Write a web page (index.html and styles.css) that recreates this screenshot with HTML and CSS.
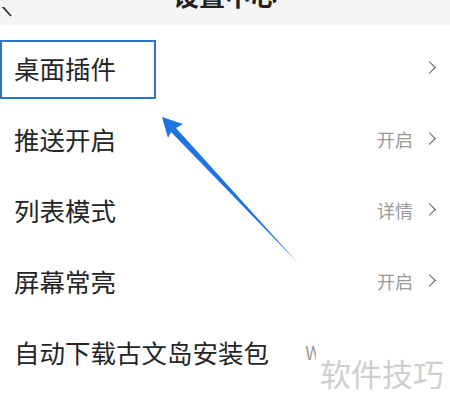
FILE: index.html
```html
<!DOCTYPE html>
<html lang="zh-CN">
  <head>
    <meta charset="UTF-8" />
    <meta name="viewport" content="width=device-width, initial-scale=1.0" />
    <title>设置中心</title>
    <link rel="stylesheet" href="styles.css">
  </head>
  <body>
    <div class="page">
      <header class="topbar">
        <span class="back">
          <svg width="14" height="12" viewBox="0 0 14 12"><path d="M12 -10 L2 -1 L11 9" fill="none" stroke="#333" stroke-width="1.8"/></svg>
        </span>
        <h1 class="title">设置中心</h1>
      </header>
      <ul class="settings">
        <li class="row">
          <span class="label">桌面插件</span>
          <span class="value"><i class="chev"></i></span>
        </li>
        <li class="row">
          <span class="label">推送开启</span>
          <span class="value">开启<i class="chev"></i></span>
        </li>
        <li class="row">
          <span class="label">列表模式</span>
          <span class="value">详情<i class="chev"></i></span>
        </li>
        <li class="row">
          <span class="label">屏幕常亮</span>
          <span class="value">开启<i class="chev"></i></span>
        </li>
        <li class="row">
          <span class="label">自动下载古文岛安装包</span>
          <span class="value">WiFi自动下载<i class="chev"></i></span>
        </li>
        <li class="row faded">
          <span class="label">清除缓存数据</span>
          <span class="value"></span>
        </li>
      </ul>

      <!-- annotation: highlight box + arrow -->
      <div class="focus-box"></div>
      <svg class="pointer" width="450" height="413" viewBox="0 0 450 413">
        <path d="M162 117 L183 124 L176 128 L298 263 L171 132 L168 138 Z" fill="#1f74e3"/>
      </svg>

      <div class="watermark">软件技巧</div>
    </div>
  </body>
</html>
```

FILE: styles.css
```css
* {
  box-sizing: border-box;
}
body {
  margin: 0;
  background: #fff;
  font-family: "Noto Sans CJK SC", "Noto Sans", sans-serif;
  color: #222;
}
.page {
  position: relative;
  width: 450px;
  height: 413px;
  overflow: hidden;
}
.topbar {
  height: 25px;
  background: #f5f5f5;
  overflow: hidden;
  position: relative;
}
.back {
  position: absolute;
  left: 0;
  top: 0;
}
.title {
  margin: -18px 0 0;
  font-size: 26px;
  line-height: 26px;
  font-weight: 700;
  text-align: center;
  color: #222;
}
.settings {
  list-style: none;
  margin: 0;
  padding: 7px 0 0;
}
.row {
  height: 71px;
  display: flex;
  align-items: center;
  justify-content: space-between;
  padding: 0 12px 0 14px;
}
.label {
  font-size: 25.5px;
  color: #252525;
}
.value {
  display: flex;
  align-items: center;
  font-size: 18px;
  color: #999;
}
.chev {
  display: inline-block;
  width: 9px;
  height: 9px;
  border-top: 1.6px solid #555;
  border-right: 1.6px solid #555;
  transform: rotate(45deg);
  margin-left: 12px;
  margin-right: 4px;
}
.faded .label {
  color: #e6e6e6;
  margin-top: 6px;
}
.focus-box {
  position: absolute;
  left: 0;
  top: 40px;
  width: 156px;
  height: 59px;
  border: 2px solid #2f72c4;
}
.pointer {
  position: absolute;
  left: 0;
  top: 0;
}
.watermark {
  position: absolute;
  left: 316px;
  top: 343px;
  width: 134px;
  height: 70px;
  background: #fff;
  font-size: 31px;
  color: #cfcfcf;
  padding: 12px 0 0 4px;
  line-height: 36px;
}
```
